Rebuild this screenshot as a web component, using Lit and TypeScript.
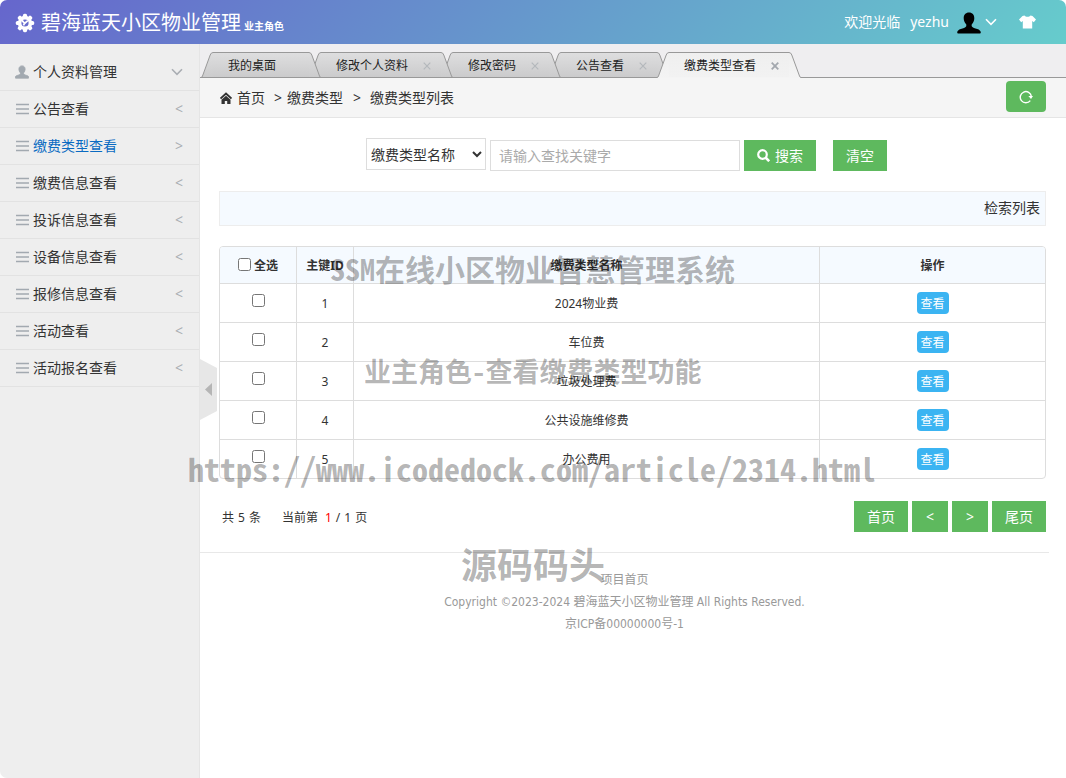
import { LitElement, html, css, svg } from "lit";
import { customElement, state } from "lit/decorators.js";
import { classMap } from "lit/directives/class-map.js";
import { styleMap } from "lit/directives/style-map.js";

interface Tab {
  label: string;
  closable: boolean;
}

const TABS: Tab[] = [
  { label: "我的桌面", closable: false },
  { label: "修改个人资料", closable: true },
  { label: "修改密码", closable: true },
  { label: "公告查看", closable: true },
  { label: "缴费类型查看", closable: true },
];

const MENU = [
  "公告查看",
  "缴费类型查看",
  "缴费信息查看",
  "投诉信息查看",
  "设备信息查看",
  "报修信息查看",
  "活动查看",
  "活动报名查看",
];

const FEES = ["2024物业费", "车位费", "垃圾处理费", "公共设施维修费", "办公费用"];

const gearTeeth = [0, 45, 90, 135, 180, 225, 270, 315];

const gearIcon = html`<svg class="gear" viewBox="0 0 20 20" aria-hidden="true">
  ${gearTeeth.map(
    (a) => svg`<rect x="7.9" y="0.8" width="4.200" height="5" rx="1.6" transform="rotate(${a} 10 10)" fill="#fff"/>`
  )}
  <circle cx="10" cy="10" r="5.400" fill="none" stroke="#fff" stroke-width="3.600" />
  <path d="M6.800 7.200 L9.600 10.400 L12.800 7.600 M9.600 10.400 L8.400 12.400" fill="none" stroke="#fff" stroke-width="1.800" />
</svg>`;

const personPath =
  "M12 1.500c-3.400 0-5.300 2.300-5.300 5.700 0 2.500 1 4.500 2.300 5.900.4.500.5 1.600.1 2.400-.7 1.200-3 1.800-5.300 2.500C1.600 18.700.3 19.800.2 21.600c0 .5.300.9.900.9h21.800c.6 0 .9-.4.9-.9-.1-1.800-1.400-2.900-3.600-3.600-2.300-.7-4.600-1.300-5.300-2.500-.4-.8-.3-1.900.1-2.400 1.300-1.400 2.300-3.400 2.300-5.900 0-3.400-1.900-5.700-5.300-5.700z";

const chevron = html`<svg class="chevron" viewBox="0 0 12 8" aria-hidden="true">
  <path d="M1 1.300 L6 6.300 L11 1.300" fill="none" stroke="currentColor" stroke-width="1.600" />
</svg>`;

@customElement("app-root")
export class AppRoot extends LitElement {
  @state() private activeTab = 4;
  @state() private activeMenu = 1;

  static styles = css`
    :host {
      display: flex;
      flex-direction: column;
      position: relative;
      min-height: 100vh;
      overflow: hidden;
      border-radius: 7px;
      background: #fff;
      color: #333;
      font: 14px/20px "Noto Sans", "Noto Sans CJK SC", sans-serif;
    }
    * {
      box-sizing: border-box;
    }
    button,
    input,
    select {
      font: inherit;
      margin: 0;
    }
    a {
      color: inherit;
      text-decoration: none;
    }
    svg {
      display: block;
      flex: none;
    }

    .header {
      display: flex;
      align-items: center;
      height: 44px;
      padding: 0 30px 0 15px;
      color: #fff;
      background: linear-gradient(135deg, #6666cc, #66cccc);
    }
    .gear {
      width: 20px;
      height: 20px;
      margin: 2px 6px 0 0;
    }
    .brand {
      display: flex;
      align-items: baseline;
      gap: 3px;
      margin: 0;
      padding-top: 4px;
      font-size: 20px;
      line-height: 40px;
      font-weight: 400;
    }
    .brand small {
      font-size: 10px;
      font-weight: 700;
    }
    .user {
      display: flex;
      align-items: center;
      margin-left: auto;
    }
    .user .name {
      margin: 0 8px 0 10px;
    }
    .avatar {
      width: 24px;
      height: 24px;
      margin-top: 2px;
    }
    .plain {
      display: flex;
      padding: 0;
      border: 0;
      color: inherit;
      background: none;
    }
    .user .chevron {
      margin: 0 22px 0 4px;
    }
    .chevron {
      width: 12px;
      height: 8px;
    }
    .shirt {
      width: 17px;
      height: 14px;
    }

    .body {
      display: flex;
      flex: 1;
    }
    .side {
      flex: none;
      width: 200px;
      padding-top: 10px;
      background: #eee;
      border-right: 1px solid #e5e5e5;
    }
    .item {
      display: flex;
      align-items: center;
      height: 37px;
      padding: 0 16px 0 15px;
      border-bottom: 1px solid #e2e2e2;
    }
    .item.active {
      color: #0a6bc2;
    }
    .item .text {
      flex: 1;
    }
    .item .icon {
      width: 14px;
      height: 14px;
      margin-right: 4px;
      color: #a2a9b0;
    }
    .item .chevron,
    .item .mark {
      color: #aaaeb3;
    }
    .item .mark {
      line-height: 16px;
    }

    .main {
      flex: 1;
      min-width: 0;
      position: relative;
    }
    .tabs {
      display: flex;
      align-items: flex-end;
      height: 34px;
      padding-left: 1px;
      background: #efeef0;
      border-bottom: 1px solid #999;
    }
    .tab {
      position: relative;
      display: flex;
      height: 26px;
      margin: 0 -12px -1px 0;
      font-size: 12px;
      line-height: 22px;
      cursor: pointer;
    }
    .tab svg.edge {
      width: 12px;
      height: 26px;
    }
    .tab .face {
      display: flex;
      align-items: center;
      padding: 2px 9px 0 15px;
      border-top: 1px solid #999;
      border-bottom: 1px solid #999;
      background: linear-gradient(#dededf, #cbcbcc);
      color: #222;
    }
    .tab.active .face {
      background: linear-gradient(#efefef, #f2f2f2);
      border-bottom-color: #f4f4f4;
    }
    .close {
      display: flex;
      width: 10px;
      height: 10px;
      margin-left: 14px;
      padding: 1px;
      border: 0;
      background: none;
      color: #b4b8bc;
    }
    .close.none {
      visibility: hidden;
    }
    .tab.active .close {
      color: #a3a8ae;
    }
    .close svg {
      width: 8px;
      height: 8px;
    }

    .crumbs {
      display: flex;
      align-items: center;
      height: 40px;
      padding: 0 20px;
      background: #f5f5f5;
      border-bottom: 1px solid #e5e5e5;
    }
    .crumbs .home {
      width: 12px;
      height: 12px;
      margin-right: 5px;
    }
    .crumbs .sep {
      width: 8px;
      margin: 0 5px 0 9px;
    }
    .crumbs .sep.wide {
      margin: 0 9px 0 10px;
    }
    .btn {
      min-width: 36px;
      height: 31px;
      padding: 0 13px;
      border: 0;
      color: #fff;
      background: #5eb95e;
      line-height: 31px;
    }
    .refresh {
      display: flex;
      align-items: center;
      margin-left: auto;
      margin-bottom: 2px;
      border-radius: 4px;
    }
    .refresh svg {
      width: 14px;
      height: 14px;
    }

    .content {
      padding: 20px 20px 0 19px;
    }
    .search {
      display: flex;
      justify-content: center;
      gap: 4px;
      padding-right: 12px;
    }
    .search select {
      width: 120px;
      height: 32px;
      padding: 0;
      border: 1px solid #ddd;
      border-radius: 0;
      background: #fff;
      color: #333;
    }
    .search input {
      width: 250px;
      height: 31px;
      margin-top: 2px;
      padding: 0 8px;
      border: 1px solid #ddd;
    }
    .search input::placeholder {
      color: #aaa;
    }
    .search .btn {
      display: flex;
      align-items: center;
      gap: 5px;
      margin-top: 2px;
    }
    .search .clear {
      margin-left: 13px;
    }
    .search svg {
      width: 13px;
      height: 13px;
    }

    .bar {
      margin-top: 20px;
      padding: 5px 5px 7px;
      line-height: 21px;
      text-align: right;
      background: #f5faff;
      border: 1px solid #ededed;
    }

    .grid {
      width: 100%;
      margin-top: 20px;
      table-layout: fixed;
      border-collapse: separate;
      border-spacing: 0;
      border: 1px solid #ddd;
      border-radius: 4px;
      overflow: hidden;
      font-size: 12px;
      text-align: center;
    }
    .grid th,
    .grid td {
      padding: 0;
      border-left: 1px solid #ddd;
    }
    .grid th:first-child,
    .grid td:first-child {
      border-left: 0;
    }
    .grid th {
      height: 36px;
      padding-top: 2px;
      background: #f5faff;
    }
    .grid td {
      height: 39px;
      border-top: 1px solid #ddd;
    }
    .grid td.words {
      padding-top: 2px;
    }
    .c-check {
      width: 76px;
    }
    .c-id {
      width: 57px;
    }
    .c-op {
      width: 226px;
    }
    .all {
      display: flex;
      justify-content: center;
      align-items: center;
      gap: 3px;
    }
    .grid input {
      display: block;
      width: 13px;
      height: 13px;
    }
    .grid th input {
      margin-bottom: 3px;
    }
    .grid td input {
      margin: 0 auto 5px;
    }
    .view {
      display: block;
      width: 32px;
      height: 22px;
      margin: 0 auto;
      border-radius: 4px;
      color: #fff;
      background: #3bb4f2;
      line-height: 24px;
    }

    .pager {
      display: flex;
      align-items: center;
      gap: 4px;
      margin-top: 22px;
      font-size: 14px;
    }
    .count {
      display: flex;
      gap: 4px;
      margin-right: auto;
      padding: 2px 0 0 3px;
      font-size: 12px;
    }
    .count .page {
      margin-left: 17px;
    }
    .count .now {
      margin-left: 3px;
      color: #f00;
    }

    .footer {
      margin: 20px 17px 0 0;
      padding-top: 16px;
      border-top: 1px solid #e8e8e8;
      color: #999;
      font-family: "DejaVu Sans Condensed", "Noto Sans CJK SC", sans-serif;
      font-size: 12px;
      line-height: 22px;
      text-align: center;
    }
    .footer p {
      margin: 0;
    }

    .handle {
      position: absolute;
      top: 315px;
      left: 0;
      width: 17px;
      height: 61px;
      padding: 0;
      border: 0;
      background: none;
    }
    .handle svg {
      width: 17px;
      height: 61px;
    }

    .overlay {
      position: absolute;
      white-space: nowrap;
      pointer-events: none;
      color: rgba(0, 0, 0, 0.3);
      font-family: "Noto Sans CJK SC", sans-serif;
      font-weight: 700;
      font-feature-settings: "hwid";
      line-height: 40px;
    }
    .o1 {
      left: 330px;
      top: 248px;
      font-size: 30px;
    }
    .o2 {
      left: 364px;
      top: 351px;
      font-size: 27px;
    }
    .o3 {
      left: 188px;
      top: 448px;
      font-size: 32px;
    }
    .o4 {
      left: 461px;
      top: 543px;
      font-size: 36px;
    }
  `;

  private renderTab(tab: Tab, i: number) {
    const active = i === this.activeTab;
    const z = active ? TABS.length + 1 : TABS.length - i;
    const id = `fill${i}`;
    const top = active ? "#efefef" : "#dededf";
    const bottom = active ? "#f4f4f4" : "#cbcbcc";
    return html`<div
      class=${classMap({ tab: true, active })}
      style=${styleMap({ zIndex: String(z) })}
      role="tab"
      aria-selected=${active}
      @click=${() => (this.activeTab = i)}
    >
      <svg class="edge" viewBox="0 0 12 26" aria-hidden="true">
        <defs>
          <linearGradient id=${id} x1="0" y1="0" x2="0" y2="1">
            <stop offset="0" stop-color=${top} />
            <stop offset="1" stop-color=${bottom} />
          </linearGradient>
        </defs>
        <path d="M12 .5 Q10 .5 9.200 3 L1.500 24 Q1 25.500 0 25.500 V26 H12 Z" fill="url(#${id})" />
        <path d="M12 .5 Q10 .5 9.200 3 L1.500 24 Q1 25.500 0 25.500" fill="none" stroke="#999" />
        ${active ? "" : svg`<path d="M0 25.500 H12" stroke="#999"/>`}
      </svg>
      <div class="face">
        <span>${tab.label}</span>
        <button class=${classMap({ close: true, none: !tab.closable })} aria-label="关闭">
          <svg viewBox="0 0 8 8"><path d="M.7 .7 L7.300 7.300 M7.300 .7 L.7 7.300" stroke="currentColor" stroke-width=${active ? 1.8 : 1.2} /></svg>
        </button>
      </div>
      <svg class="edge" viewBox="0 0 12 26" aria-hidden="true">
        <defs>
          <linearGradient id="${id}r" x1="0" y1="0" x2="0" y2="1">
            <stop offset="0" stop-color=${top} />
            <stop offset="1" stop-color=${bottom} />
          </linearGradient>
        </defs>
        <path d="M0 .5 Q2 .5 2.800 3 L10.500 24 Q11 25.500 12 25.500 V26 H0 Z" fill="url(#${id}r)" />
        <path d="M0 .5 Q2 .5 2.800 3 L10.500 24 Q11 25.500 12 25.500" fill="none" stroke="#999" />
        ${active ? "" : svg`<path d="M0 25.500 H12" stroke="#999"/>`}
      </svg>
    </div>`;
  }

  render() {
    return html`
      <header class="header">
        ${gearIcon}
        <h1 class="brand">碧海蓝天小区物业管理<small>业主角色</small></h1>
        <div class="user">
          <span>欢迎光临</span>
          <span class="name">yezhu</span>
          <svg class="avatar" viewBox="0 0 24 24" aria-hidden="true"><path d=${personPath} fill="#000" /></svg>
          <button class="plain" aria-label="用户菜单">${chevron}</button>
          <button class="plain" aria-label="换肤">
            <svg class="shirt" viewBox="0 0 17 14">
              <path d="M5.500 .5 C6.500 2.200 10.500 2.200 11.500 .5 L13.500 1 L17 4.600 L14.800 7.200 L13.200 6 V13.500 H3.800 V6 L2.200 7.200 L0 4.600 L3.500 1 Z" fill="#fff" />
            </svg>
          </button>
        </div>
      </header>

      <div class="body">
        <nav class="side">
          <a class="item" href="#">
            <svg class="icon" viewBox="0 0 24 24" aria-hidden="true"><path d=${personPath} fill="currentColor" stroke="currentColor" stroke-width="1.500" /></svg>
            <span class="text">个人资料管理</span>
            ${chevron}
          </a>
          ${MENU.map(
            (label, i) => html`<a
              class=${classMap({ item: true, active: i === this.activeMenu })}
              href="#"
              @click=${() => (this.activeMenu = i)}
            >
              <svg class="icon" viewBox="0 0 14 14" aria-hidden="true">
                <path d="M1 2.500 H14 M1 7 H14 M1 11.500 H14" stroke="currentColor" stroke-width="1.400" />
              </svg>
              <span class="text">${label}</span>
              <span class="mark">${i === this.activeMenu ? ">" : "<"}</span>
            </a>`
          )}
        </nav>

        <main class="main">
          <div class="tabs" role="tablist">${TABS.map((t, i) => this.renderTab(t, i))}</div>

          <div class="crumbs">
            <svg class="home" viewBox="0 0 12 12" aria-hidden="true">
              <path d="M.5 6.500 L6 1.500 L11.500 6.500" fill="none" stroke="#333" stroke-width="1.900" />
              <path d="M6 3.800 L10.500 7.800 V12 H7.200 V9 H4.800 V12 H1.500 V7.800 Z" fill="#333" />
            </svg>
            <a href="#">首页</a>
            <span class="sep">&gt;</span>
            <span>缴费类型</span>
            <span class="sep wide">&gt;</span>
            <span>缴费类型列表</span>
            <button class="btn refresh" aria-label="刷新">
              <svg viewBox="0 0 14 14">
                <path d="M11.300 10.600 A5.600 5.600 0 1 1 12.400 6.500" fill="none" stroke="#fff" stroke-width="1.400" />
                <path d="M9.400 6 H14 L12 9 Z" fill="#fff" />
              </svg>
            </button>
          </div>

          <div class="content">
            <form class="search" @submit=${(e: Event) => e.preventDefault()}>
              <select aria-label="查找字段">
                <option>缴费类型名称</option>
              </select>
              <input type="text" aria-label="查找关键字" placeholder="请输入查找关键字" />
              <button class="btn" type="submit">
                <svg viewBox="0 0 13 13" aria-hidden="true">
                  <circle cx="5.500" cy="5.500" r="4.300" fill="none" stroke="#fff" stroke-width="2.200" />
                  <path d="M8.500 8.500 L12.200 12.200" stroke="#fff" stroke-width="2.600" />
                </svg>
                <span>搜索</span>
              </button>
              <button class="btn clear" type="reset">清空</button>
            </form>

            <div class="bar">检索列表</div>

            <table class="grid">
              <colgroup>
                <col class="c-check" />
                <col class="c-id" />
                <col />
                <col class="c-op" />
              </colgroup>
              <thead>
                <tr>
                  <th><label class="all"><input type="checkbox" />全选</label></th>
                  <th>主键ID</th>
                  <th>缴费类型名称</th>
                  <th>操作</th>
                </tr>
              </thead>
              <tbody>
                ${FEES.map(
                  (fee, i) => html`<tr>
                    <td><input type="checkbox" aria-label=${fee} /></td>
                    <td class="words">${i + 1}</td>
                    <td class="words">${fee}</td>
                    <td><a class="view" href="#">查看</a></td>
                  </tr>`
                )}
              </tbody>
            </table>

            <div class="pager">
              <div class="count">
                <span>共</span><span>5</span><span>条</span>
                <span class="page">当前第</span><span class="now">1</span><span>/</span><span>1</span><span>页</span>
              </div>
              <button class="btn">首页</button>
              <button class="btn">&lt;</button>
              <button class="btn">&gt;</button>
              <button class="btn">尾页</button>
            </div>
          </div>

          <footer class="footer">
            <p><a href="#">项目首页</a></p>
            <p>Copyright ©2023-2024 碧海蓝天小区物业管理 All Rights Reserved.</p>
            <p>京ICP备00000000号-1</p>
          </footer>

          <button class="handle" aria-label="收起菜单">
            <svg viewBox="0 0 17 61">
              <path d="M0 0 L17 9 V52 L0 61 Z" fill="#e7e7e7" />
              <path d="M12 24 V37 L5 30.500 Z" fill="#b5b5b5" />
            </svg>
          </button>
        </main>
      </div>

      <div class="overlay o1">SSM在线小区物业智慧管理系统</div>
      <div class="overlay o2">业主角色-查看缴费类型功能</div>
      <div class="overlay o3">https://www.icodedock.com/article/2314.html</div>
      <div class="overlay o4">源码码头</div>
    `;
  }
}
